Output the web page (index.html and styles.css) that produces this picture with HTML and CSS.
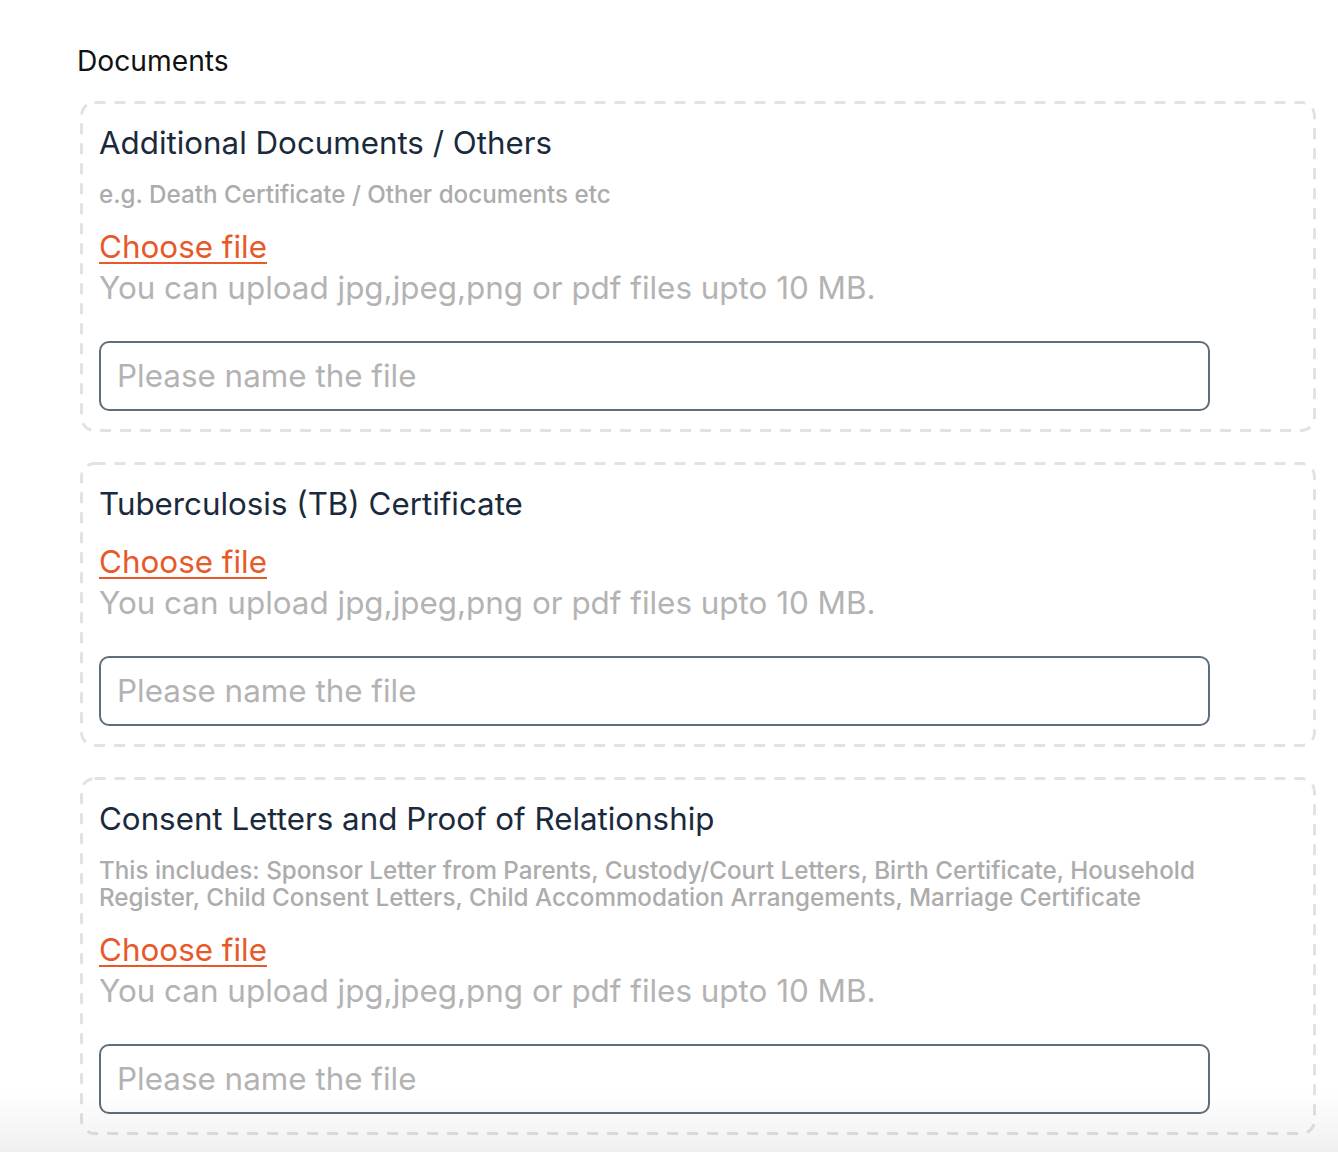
FILE: index.html
```html
<!DOCTYPE html>
<html lang="en">
<head>
  <meta charset="UTF-8" />
  <meta name="viewport" content="width=device-width, initial-scale=1.0"/>
  <title>Documents</title>
  <link rel="stylesheet" href="styles.css">
</head>
<body>

  <div class="documents">
    <h3 class="section-title">Documents</h3>

    <div class="doc-box">
      <div class="doc-inner">
        <h4 class="doc-title">Additional Documents / Others</h4>
        <p class="doc-hint">e.g. Death Certificate / Other documents etc</p>
        <a href="#" class="choose-file">Choose file</a>
        <p class="upload-note">You can upload jpg,jpeg,png or pdf files upto 10 MB.</p>
        <input type="text" class="file-name" placeholder="Please name the file" />
      </div>
    </div>

    <div class="doc-box">
      <div class="doc-inner">
        <h4 class="doc-title">Tuberculosis (TB) Certificate</h4>
        <a href="#" class="choose-file">Choose file</a>
        <p class="upload-note">You can upload jpg,jpeg,png or pdf files upto 10 MB.</p>
        <input type="text" class="file-name" placeholder="Please name the file" />
      </div>
    </div>

    <div class="doc-box">
      <div class="doc-inner">
        <h4 class="doc-title">Consent Letters and Proof of Relationship</h4>
        <p class="doc-hint">This includes: Sponsor Letter from Parents, Custody/Court Letters, Birth Certificate, Household Register, Child Consent Letters, Child Accommodation Arrangements, Marriage Certificate</p>
        <a href="#" class="choose-file">Choose file</a>
        <p class="upload-note">You can upload jpg,jpeg,png or pdf files upto 10 MB.</p>
        <input type="text" class="file-name" placeholder="Please name the file" />
      </div>
    </div>
  </div>

  <div class="bottom-fade"></div>

</body>
</html>
```

FILE: styles.css
```css
body {
  margin: 0;
  font-family: 'Inter', 'Noto Sans', sans-serif;
  background: #fff;
  color: #1d2d3e;
}

.documents {
  width: 1236px;
  padding: 45px 0 40px 80px;
}

.section-title {
  margin: 0 0 23px -3px;
  font-size: 28.2px;
  line-height: 33px;
  font-weight: 400;
  color: #111;
}

/* dashed frame drawn as svg so the dashes come out long like the design */
.doc-box {
  padding: 23px 20px 21px 19px;
  margin-bottom: 30px;
  border-radius: 14px;
  background-image: url("data:image/svg+xml,%3Csvg xmlns='http://www.w3.org/2000/svg' width='100%25' height='100%25'%3E%3Crect x='1.5' y='1.5' width='calc(100%25 - 3px)' height='calc(100%25 - 3px)' rx='13' ry='13' fill='none' stroke='%23e2e2e2' stroke-width='3' stroke-dasharray='11 9'/%3E%3C/svg%3E");
}

.doc-inner {
  max-width: 1111px;
  display: flex;
  flex-direction: column;
  align-items: flex-start;
}

.doc-title {
  margin: 0 0 19px;
  font-size: 31.3px;
  line-height: 38px;
  font-weight: 400;
  color: #1a2a3c;
}

.doc-hint {
  margin: 0 0 19px;
  font-size: 24.2px;
  line-height: 27px;
  font-weight: 500;
  color: #acacac;
}

.choose-file {
  font-size: 31.4px;
  line-height: 41px;
  color: #e8592a;
  text-decoration: underline;
  text-underline-offset: 4px;
  text-decoration-thickness: 2px;
}

.upload-note {
  margin: 0 0 32px;
  font-size: 31.4px;
  line-height: 41px;
  color: #b3b3b3;
}

.file-name {
  box-sizing: border-box;
  width: 100%;
  height: 70px;
  padding: 0 16px;
  border: 2px solid #5e6e7d;
  border-radius: 10px;
  font-family: inherit;
  font-size: 31.4px;
  color: #1c2c3e;
  background: transparent;
}

.file-name::placeholder {
  color: #b3b3b3;
}

.bottom-fade {
  position: fixed;
  left: 0;
  right: 0;
  bottom: 0;
  height: 60px;
  background: linear-gradient(to bottom, rgba(0,0,0,0), rgba(0,0,0,0.06));
  pointer-events: none;
}
```
